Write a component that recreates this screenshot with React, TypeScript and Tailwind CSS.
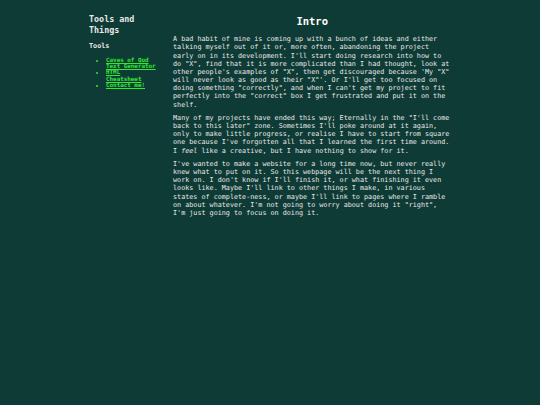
export default function App() {
  return (
    <div className="min-h-[405px] w-full bg-[#0f3b36] text-[#e8e8e8]" style={{ fontFamily: '"DejaVu Sans Mono", monospace' }}>
      <div className="mx-auto flex w-[362px] gap-[16px] pt-[14px]">
        <aside className="w-[68px] shrink-0">
          <h1 className="text-[8.4px] font-bold leading-[11px]">Tools and Things</h1>
          <h2 className="mt-[6px] text-[6.8px] font-bold leading-[8.2px]">Tools</h2>
          <ul className="mt-[6.5px] list-disc pl-[17px] text-[5.9px] leading-[6.35px] text-[#33e833]">
            <li className="leading-[6.35px]"><a className="underline font-bold leading-[6.35px]" href="#">Caves of Qud Text Generator</a></li>
            <li className="leading-[6.35px]"><a className="underline font-bold leading-[6.35px]" href="#">HTML Cheatsheet</a></li>
            <li className="leading-[6.35px]"><a className="underline font-bold leading-[6.35px]" href="#">Contact me!</a></li>
          </ul>
        </aside>
        <main className="w-[278.4px] shrink-0 text-[6.75px] leading-[8.17px]">
          <h1 className="mt-[1px] text-center text-[10.5px] font-bold leading-[12.6px] text-white">Intro</h1>
          <p className="mt-[7.6px]">
            A bad habit of mine is coming up with a bunch of ideas and either talking myself out of it or, more often, abandoning the project early on in its development. I'll start doing research into how to do "X", find that it is more complicated than I had thought, look at other people's examples of "X", then get discouraged because 'My "X" will never look as good as their "X"'. Or I'll get too focused on doing something "correctly", and when I can't get my project to fit perfectly into the "correct" box I get frustrated and put it on the shelf.
          </p>
          <p className="mt-[5.2px]">
            Many of my projects have ended this way; Eternally in the "I'll come back to this later" zone. Sometimes I'll poke around at it again, only to make little progress, or realise I have to start from square one because I've forgotten all that I learned the first time around. I <em>feel</em> like a creative, but I have nothing to show for it.
          </p>
          <p className="mt-[5.2px]">
            I've wanted to make a website for a long time now, but never really knew what to put on it. So this webpage will be the next thing I work on. I don't know if I'll finish it, or what finishing it even looks like. Maybe I'll link to other things I make, in various states of complete-ness, or maybe I'll link to pages where I ramble on about whatever. I'm not going to worry about doing it "right", I'm just going to focus on doing it.
          </p>
        </main>
      </div>
    </div>
  );
}
